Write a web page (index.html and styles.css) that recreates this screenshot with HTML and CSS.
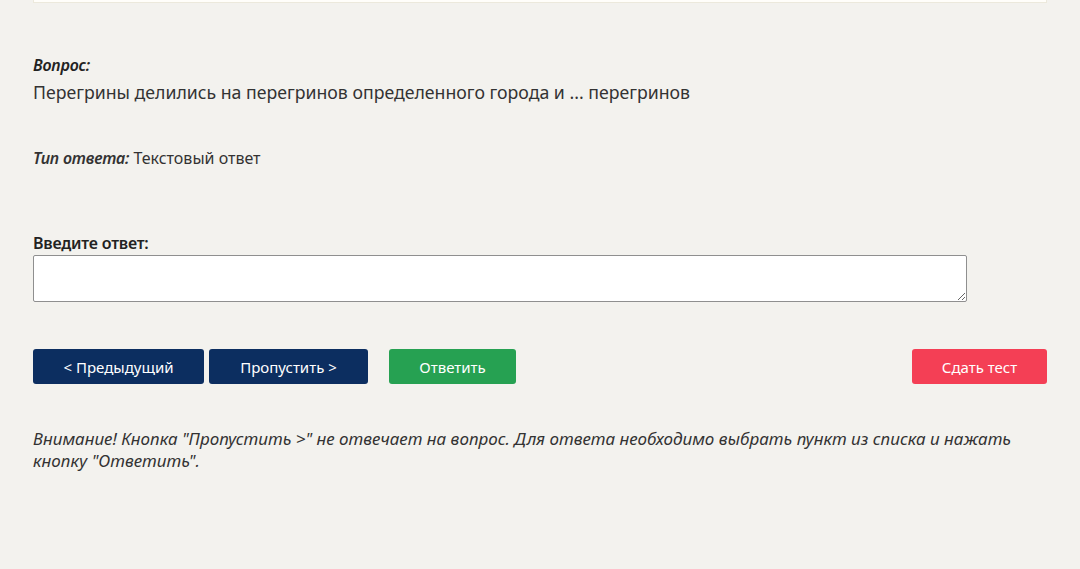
FILE: index.html
```html
<!DOCTYPE html>
<html lang="ru">
<head>
    <meta charset="UTF-8">
    <meta name="viewport" content="width=device-width, initial-scale=1.0">
    <title>Тест</title>
    <link rel="stylesheet" href="styles.css">
</head>
<body>
    <div class="page">
        <div class="top-box"></div>

        <div class="question">
            <div class="label">Вопрос:</div>
            <div class="question-text">Перегрины делились на перегринов определенного города и ... перегринов</div>
        </div>

        <div class="answer-type">
            <span class="label">Тип ответа:</span> Текстовый ответ
        </div>

        <div class="answer">
            <label for="answerInput" class="answer-label">Введите ответ:</label>
            <textarea id="answerInput" class="answer-input"></textarea>
        </div>

        <div class="controls">
            <button class="btn nav-btn prev-btn">&lt; Предыдущий</button>
            <button class="btn nav-btn skip-btn">Пропустить &gt;</button>
            <button class="btn answer-btn">Ответить</button>
            <button class="btn finish-btn">Сдать тест</button>
        </div>

        <p class="notice">Внимание! Кнопка "Пропустить &gt;" не отвечает на вопрос. Для ответа необходимо выбрать пункт из списка и нажать кнопку "Ответить".</p>
    </div>
</body>
</html>
```

FILE: styles.css
```css
body {
    margin: 0;
    background-color: #f3f2ee;
    font-family: "Noto Sans", "Open Sans", sans-serif;
    color: #222;
}
.page {
    padding: 0 33px;
}
.top-box {
    height: 2px;
    background: #fffefa;
    border: 1px solid #ece9dc;
    border-top: none;
}
.question {
    margin-top: 50px;
}
.label {
    font-weight: 600;
    font-style: italic;
    font-size: 16px;
    letter-spacing: -0.2px;
}
.question .label {
    line-height: 24px;
    margin-bottom: 2px;
}
.question-text {
    font-size: 17.7px;
    line-height: 26px;
    color: #333;
}
.answer-type {
    margin-top: 41px;
    font-size: 16px;
    line-height: 24px;
    color: #333;
}
.answer {
    margin-top: 62px;
}
.answer-label {
    display: block;
    font-size: 16px;
    font-weight: 600;
    line-height: 23px;
    letter-spacing: -0.2px;
}
.answer-input {
    display: block;
    box-sizing: border-box;
    width: 934px;
    height: 47px;
    margin-top: 0;
    border: 1px solid #8f8f8f;
    border-radius: 2px;
    background: #fff;
}
.controls {
    display: flex;
    margin-top: 47px;
}
.btn {
    height: 35px;
    border: none;
    border-radius: 3px;
    color: #fff;
    font-family: "Noto Sans", "Open Sans", sans-serif;
    font-size: 15px;
    padding: 0;
    cursor: pointer;
}
.nav-btn {
    background-color: #0c2e60;
}
.prev-btn {
    width: 171px;
}
.skip-btn {
    width: 159px;
    margin-left: 5px;
}
.answer-btn {
    width: 127px;
    margin-left: 21px;
    background-color: #26a152;
}
.finish-btn {
    width: 135px;
    margin-left: auto;
    background-color: #f43f55;
}
.notice {
    margin: 44px 0 0;
    font-size: 17px;
    font-style: italic;
    line-height: 22px;
    color: #333;
    width: 990px;
}
```
